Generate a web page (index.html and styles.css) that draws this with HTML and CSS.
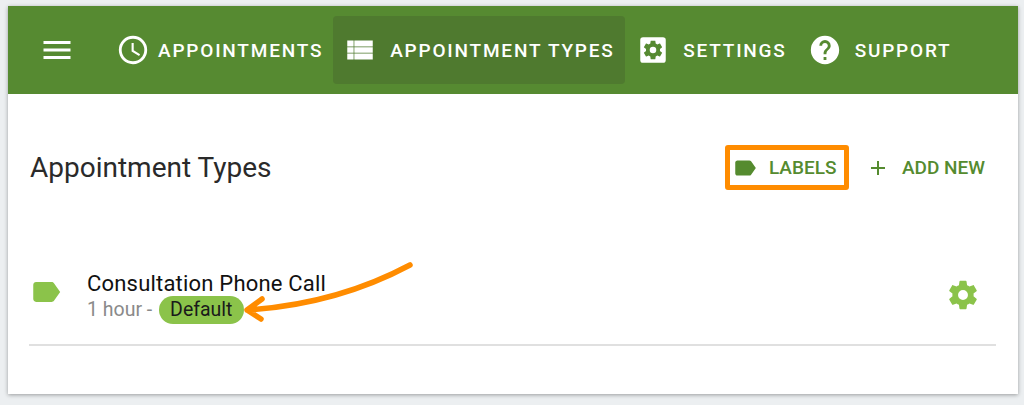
FILE: index.html
```html
<!DOCTYPE html>
<html lang="en">
<head>
  <meta charset="UTF-8" />
  <title>Appointment Types</title>
  <link rel="stylesheet" href="styles.css">
</head>
<body>
  <div class="card">
    <nav class="topbar">
      <svg class="icon menu-icon" viewBox="0 0 24 24"><path d="M3 6h18v2H3V6m0 5h18v2H3v-2m0 5h18v2H3v-2Z"/></svg>
      <a class="tab tab-appointments">
        <svg class="icon" viewBox="0 0 24 24"><path d="M12,20A8,8 0 0,0 20,12A8,8 0 0,0 12,4A8,8 0 0,0 4,12A8,8 0 0,0 12,20M12,2A10,10 0 0,1 22,12A10,10 0 0,1 12,22C6.47,22 2,17.5 2,12A10,10 0 0,1 12,2M12.5,7V12.25L17,14.92L16.25,16.15L11,13V7H12.5Z"/></svg>
        <span>APPOINTMENTS</span>
      </a>
      <a class="tab tab-active">
        <svg class="icon" viewBox="0 0 24 24"><path d="M3,5.3H7.5V9.5H3ZM8,5.3H21V9.5H8ZM3,10H7.5V14H3ZM8,10H21V14H8ZM3,14.5H7.5V18.7H3ZM8,14.5H21V18.7H8Z"/></svg>
        <span>APPOINTMENT TYPES</span>
      </a>
      <a class="tab tab-settings">
        <svg class="icon" viewBox="0 0 24 24">
          <rect x="3" y="3" width="18" height="18" rx="2"/>
          <path class="gear-cut" transform="translate(12 12) scale(.66) translate(-12 -12)" d="M12,15.5A3.5,3.5 0 0,1 8.5,12A3.5,3.5 0 0,1 12,8.5A3.5,3.5 0 0,1 15.5,12A3.5,3.5 0 0,1 12,15.5M19.43,12.97C19.47,12.65 19.5,12.33 19.5,12C19.5,11.67 19.47,11.34 19.43,11L21.54,9.37C21.73,9.22 21.78,8.95 21.66,8.73L19.66,5.27C19.54,5.05 19.27,4.96 19.05,5.05L16.56,6.05C16.04,5.66 15.5,5.32 14.87,5.07L14.5,2.42C14.46,2.18 14.25,2 14,2H10C9.75,2 9.54,2.18 9.5,2.42L9.13,5.07C8.5,5.32 7.96,5.66 7.44,6.05L4.95,5.05C4.73,4.96 4.46,5.05 4.34,5.27L2.34,8.73C2.21,8.95 2.27,9.22 2.46,9.37L4.57,11C4.53,11.34 4.5,11.67 4.5,12C4.5,12.33 4.53,12.65 4.57,12.97L2.46,14.63C2.27,14.78 2.21,15.05 2.34,15.27L4.34,18.73C4.46,18.95 4.73,19.03 4.95,18.95L7.44,17.94C7.96,18.34 8.5,18.68 9.13,18.93L9.5,21.58C9.54,21.82 9.75,22 10,22H14C14.25,22 14.46,21.82 14.5,21.58L14.87,18.93C15.5,18.67 16.04,18.34 16.56,17.94L19.05,18.95C19.27,19.03 19.54,18.95 19.66,18.73L21.66,15.27C21.78,15.05 21.73,14.78 21.54,14.63L19.43,12.97Z"/>
        </svg>
        <span>SETTINGS</span>
      </a>
      <a class="tab tab-support">
        <svg class="icon" viewBox="0 0 24 24"><path d="M15.07,11.25L14.17,12.17C13.45,12.89 13,13.5 13,15H11V14.5C11,13.39 11.45,12.39 12.17,11.67L13.41,10.41C13.78,10.05 14,9.55 14,9C14,7.89 13.1,7 12,7A2,2 0 0,0 10,9H8A4,4 0 0,1 12,5A4,4 0 0,1 16,9C16,9.88 15.64,10.67 15.07,11.25M13,19H11V17H13M12,2A10,10 0 0,0 2,12A10,10 0 0,0 12,22A10,10 0 0,0 22,12C22,6.47 17.5,2 12,2Z"/></svg>
        <span>SUPPORT</span>
      </a>
    </nav>

    <main class="content">
      <header class="page-head">
        <h1>Appointment Types</h1>
        <div class="actions">
          <a class="action action-labels">
            <svg class="icon" viewBox="0 0 24 24"><path d="M17.63,5.84C17.27,5.33 16.67,5 16,5L5,5.01C3.9,5.01 3,5.9 3,7V17C3,18.1 3.9,18.99 5,18.99L16,19C16.67,19 17.27,18.67 17.63,18.16L22,12L17.63,5.84Z"/></svg>
            <span>LABELS</span>
          </a>
          <a class="action action-add">
            <svg class="icon" viewBox="0 0 24 24"><path d="M19,13H13V19H11V13H5V11H11V5H13V11H19V13Z"/></svg>
            <span>ADD NEW</span>
          </a>
        </div>
      </header>

      <div class="type-row">
        <svg class="icon type-label" viewBox="0 0 24 24"><path d="M17.63,5.84C17.27,5.33 16.67,5 16,5L5,5.01C3.9,5.01 3,5.9 3,7V17C3,18.1 3.9,18.99 5,18.99L16,19C16.67,19 17.27,18.67 17.63,18.16L22,12L17.63,5.84Z"/></svg>
        <div class="type-text">
          <div class="type-name">Consultation Phone Call</div>
          <div class="type-meta">1 hour - <span class="chip">Default</span></div>
        </div>
        <svg class="icon type-gear" viewBox="0 0 24 24"><path d="M12,15.5A3.5,3.5 0 0,1 8.5,12A3.5,3.5 0 0,1 12,8.5A3.5,3.5 0 0,1 15.5,12A3.5,3.5 0 0,1 12,15.5M19.43,12.97C19.47,12.65 19.5,12.33 19.5,12C19.5,11.67 19.47,11.34 19.43,11L21.54,9.37C21.73,9.22 21.78,8.95 21.66,8.73L19.66,5.27C19.54,5.05 19.27,4.96 19.05,5.05L16.56,6.05C16.04,5.66 15.5,5.32 14.87,5.07L14.5,2.42C14.46,2.18 14.25,2 14,2H10C9.75,2 9.54,2.18 9.5,2.42L9.13,5.07C8.5,5.32 7.96,5.66 7.44,6.05L4.95,5.05C4.73,4.96 4.46,5.05 4.34,5.27L2.34,8.73C2.21,8.95 2.27,9.22 2.46,9.37L4.57,11C4.53,11.34 4.5,11.67 4.5,12C4.5,12.33 4.53,12.65 4.57,12.97L2.46,14.63C2.27,14.78 2.21,15.05 2.34,15.27L4.34,18.73C4.46,18.95 4.73,19.03 4.95,18.95L7.44,17.94C7.96,18.34 8.5,18.68 9.13,18.93L9.5,21.58C9.54,21.82 9.75,22 10,22H14C14.25,22 14.46,21.82 14.5,21.58L14.87,18.93C15.5,18.67 16.04,18.34 16.56,17.94L19.05,18.95C19.27,19.03 19.54,18.95 19.66,18.73L21.66,15.27C21.78,15.05 21.73,14.78 21.54,14.63L19.43,12.97Z"/></svg>
      </div>
    </main>

    <!-- arrow drawn on top of the screenshot -->
    <svg class="arrow" viewBox="0 0 1024 405">
      <path d="M410 265C365 289 310 306 247 310M262 299L247 310L261 319"/>
    </svg>
  </div>
</body>
</html>
```

FILE: styles.css
```css
* {
  box-sizing: border-box;
  margin: 0;
  padding: 0;
  font-family: 'Roboto', sans-serif;
}

html,
body {
  height: 100%;
  overflow: hidden;
}

body {
  background-color: #eceff1;
  padding: 6px 6px 11px 8px;
}

.card {
  height: 388px;
  background-color: #fff;
  box-shadow: 0 1px 4px rgba(0, 0, 0, 0.35);
}

.icon {
  display: block;
  flex: none;
  fill: currentColor;
}

/* Top bar */
.topbar {
  display: flex;
  align-items: center;
  height: 88px;
  background-color: #568a31;
  color: #fff;
}

.menu-icon {
  width: 36px;
  height: 36px;
  margin-left: 31px;
  margin-right: 41px;
}

.tab {
  display: flex;
  align-items: center;
  height: 68px;
  font-size: 19px;
  font-weight: 500;
  letter-spacing: 1.8px;
  border-radius: 4px;
}

.tab .icon {
  width: 34px;
  height: 34px;
  margin-right: 13px;
}

.tab-appointments .icon {
  margin-right: 8px;
}

.tab-active {
  width: 292px;
  margin-left: 10px;
  padding-left: 10px;
  background-color: #4f7a2f;
}

.tab-settings {
  margin-left: 11px;
}

.tab-support {
  margin-left: 21px;
}

.gear-cut {
  fill: #568a31;
}

/* Content */
.content {
  padding: 0 22px 0 21px;
}

.page-head {
  display: flex;
  align-items: center;
  justify-content: space-between;
  height: 147px;
}

.page-head h1 {
  font-size: 28px;
  font-weight: 400;
  color: #2a2a2a;
  margin-left: 1px;
}

.actions {
  display: flex;
  align-items: center;
  color: #558b2f;
}

.action {
  display: flex;
  align-items: center;
  height: 45px;
  font-size: 19px;
  font-weight: 500;
}

.action-labels {
  width: 124px;
  padding-left: 2px;
  border: 5px solid #ff8c00;
  border-radius: 3px;
}

.action-labels .icon {
  width: 26px;
  height: 26px;
  margin-right: 11px;
}

.action-add {
  margin-left: 17px;
  margin-right: 11px;
}

.action-add .icon {
  width: 24px;
  height: 24px;
  margin-right: 12px;
}

.type-row {
  display: flex;
  align-items: center;
  height: 105px;
  padding-top: 2px;
  border-bottom: 2px solid #e0e0e0;
}

.type-label {
  width: 34px;
  height: 34px;
  color: #8bc34a;
  margin-right: 24px;
  margin-top: -4px;
}

.type-text {
  flex: 1;
  margin-top: 8px;
}

.type-name {
  font-size: 22px;
  line-height: 24px;
  letter-spacing: 0.2px;
  color: #111;
}

.type-meta {
  display: flex;
  align-items: center;
  gap: 2px;
  font-size: 19.5px;
  color: #8a8a8a;
  white-space: pre;
}

.chip {
  display: block;
  height: 28px;
  line-height: 28px;
  padding: 0 12px 0 11px;
  border-radius: 14px;
  background-color: #8bc34a;
  color: #1a1a1a;
}

.type-gear {
  width: 34px;
  height: 34px;
  color: #8bc34a;
  margin-right: 16px;
  margin-top: 2px;
}

/* Annotation arrow */
.arrow {
  position: absolute;
  left: 0;
  top: 0;
  width: 1024px;
  height: 405px;
  pointer-events: none;
}

.arrow path {
  fill: none;
  stroke: #ff8c00;
  stroke-width: 5.5;
  stroke-linecap: round;
  stroke-linejoin: round;
}
```
